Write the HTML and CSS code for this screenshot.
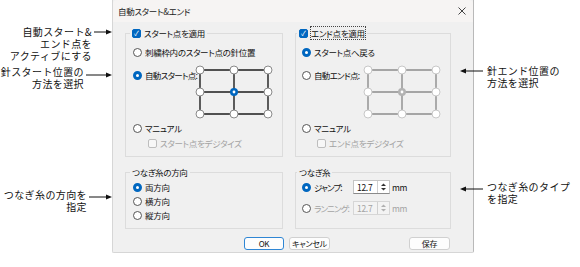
FILE: index.html
```html
<!DOCTYPE html>
<html>
<head>
    <title>自動スタート&amp;エンド</title>
    <link rel="stylesheet" href="styles.css">
</head>
<body>
<div class="page">

    <!-- left callouts -->
    <div class="notes-left">
        <div class="callout">
            <div class="note-text">自動スタート&amp;<br>エンド点を<br>アクティブにする</div>
            <svg class="arrow arrow-r" width="18" height="12"><line x1="0" y1="6" x2="13" y2="6"/><polygon points="18,6 12,3.5 12,8.5"/></svg>
        </div>
        <div class="callout callout-2">
            <div class="note-text">針スタート位置の<br>方法を選択</div>
            <svg class="arrow arrow-r arrow-low" width="26" height="12"><line x1="0" y1="6" x2="21" y2="6"/><polygon points="26,6 20,3.5 20,8.5"/></svg>
        </div>
        <div class="callout callout-3">
            <div class="note-text">つなぎ糸の方向を<br>指定</div>
            <svg class="arrow arrow-r arrow-mid" width="23" height="12"><line x1="0" y1="6" x2="18" y2="6"/><polygon points="23,6 17,3.5 17,8.5"/></svg>
        </div>
    </div>

    <!-- dialog -->
    <div class="dialog">
        <div class="titlebar">
            <span class="title">自動スタート&amp;エンド</span>
            <svg class="close" width="8" height="8"><line x1="0.5" y1="0.5" x2="7.5" y2="7.5"/><line x1="7.5" y1="0.5" x2="0.5" y2="7.5"/></svg>
        </div>
        <div class="dlg-body">
            <div class="groups">

                <div class="group">
                    <div class="legend"><span class="check on">✓</span>スタート点を適用</div>
                    <div class="row first"><span class="radio"></span>刺繍枠内のスタート点の針位置</div>
                    <div class="grid-row">
                        <div class="row grid-label"><span class="radio on"></span>自動スタート点:</div>
                        <svg class="pick" width="78" height="56">
                            <g class="lines">
                                <line x1="5" y1="6" x2="73" y2="6"/><line x1="5" y1="28" x2="73" y2="28"/><line x1="5" y1="50" x2="73" y2="50"/>
                                <line x1="5" y1="6" x2="5" y2="50"/><line x1="39" y1="6" x2="39" y2="50"/><line x1="73" y1="6" x2="73" y2="50"/>
                            </g>
                            <g class="dots">
                                <circle cx="5" cy="6" r="4"/><circle cx="39" cy="6" r="4"/><circle cx="73" cy="6" r="4"/>
                                <circle cx="5" cy="28" r="4"/><circle cx="73" cy="28" r="4"/>
                                <circle cx="5" cy="50" r="4"/><circle cx="39" cy="50" r="4"/><circle cx="73" cy="50" r="4"/>
                            </g>
                            <circle class="dot-on" cx="39" cy="28" r="3"/>
                            <circle cx="39" cy="28" r="1.4" fill="#fff"/>
                        </svg>
                    </div>
                    <div class="row manual"><span class="radio"></span>マニュアル</div>
                    <div class="row sub off"><span class="check"></span>スタート点をデジタイズ</div>
                </div>

                <div class="group right">
                    <div class="legend"><span class="check on">✓</span><span class="focus">エンド点を適用</span></div>
                    <div class="row first"><span class="radio on"></span>スタート点へ戻る</div>
                    <div class="grid-row">
                        <div class="row grid-label"><span class="radio"></span>自動エンド点:</div>
                        <svg class="pick disabled" width="78" height="56">
                            <g class="lines">
                                <line x1="5" y1="6" x2="73" y2="6"/><line x1="5" y1="28" x2="73" y2="28"/><line x1="5" y1="50" x2="73" y2="50"/>
                                <line x1="5" y1="6" x2="5" y2="50"/><line x1="39" y1="6" x2="39" y2="50"/><line x1="73" y1="6" x2="73" y2="50"/>
                            </g>
                            <g class="dots">
                                <circle cx="5" cy="6" r="4"/><circle cx="39" cy="6" r="4"/><circle cx="73" cy="6" r="4"/>
                                <circle cx="5" cy="28" r="4"/><circle cx="73" cy="28" r="4"/>
                                <circle cx="5" cy="50" r="4"/><circle cx="39" cy="50" r="4"/><circle cx="73" cy="50" r="4"/>
                            </g>
                            <circle class="dot-on" cx="39" cy="28" r="3"/>
                            <circle cx="39" cy="28" r="1.4" fill="#fff"/>
                        </svg>
                    </div>
                    <div class="row manual"><span class="radio"></span>マニュアル</div>
                    <div class="row sub off"><span class="check"></span>エンド点をデジタイズ</div>
                </div>

                <div class="group">
                    <div class="legend">つなぎ糸の方向</div>
                    <div class="row dir first-dir"><span class="radio on"></span>両方向</div>
                    <div class="row dir"><span class="radio"></span>横方向</div>
                    <div class="row dir"><span class="radio"></span>縦方向</div>
                </div>

                <div class="group right">
                    <div class="legend">つなぎ糸</div>
                    <div class="spin-row first-spin">
                        <div class="row spin-label"><span class="radio on"></span>ジャンプ:</div>
                        <div class="spin">
                            <span class="spin-val">12.7</span>
                            <svg class="spin-btn" width="11" height="12"><polygon points="5.5,2.5 8,5 3,5"/><polygon points="3,7 8,7 5.5,9.5"/></svg>
                        </div>
                        <span class="unit">mm</span>
                    </div>
                    <div class="spin-row second-spin off">
                        <div class="row spin-label"><span class="radio"></span>ランニング:</div>
                        <div class="spin">
                            <span class="spin-val">12.7</span>
                            <svg class="spin-btn" width="11" height="12"><polygon points="5.5,2.5 8,5 3,5"/><polygon points="3,7 8,7 5.5,9.5"/></svg>
                        </div>
                        <span class="unit">mm</span>
                    </div>
                </div>

            </div>

            <div class="buttons">
                <button class="btn ok">OK</button>
                <button class="btn cancel">キャンセル</button>
                <button class="btn save">保存</button>
            </div>
        </div>
    </div>

    <!-- right callouts -->
    <div class="notes-right">
        <div class="callout">
            <svg class="arrow arrow-l" width="23" height="12"><polygon points="0,6 6,3.5 6,8.5"/><line x1="5" y1="6" x2="23" y2="6"/></svg>
            <div class="note-text">針エンド位置の<br>方法を選択</div>
        </div>
        <div class="callout callout-r2">
            <svg class="arrow arrow-l arrow-mid" width="23" height="12"><polygon points="0,6 6,3.5 6,8.5"/><line x1="5" y1="6" x2="23" y2="6"/></svg>
            <div class="note-text">つなぎ糸のタイプ<br>を指定</div>
        </div>
    </div>

</div>
</body>
</html>
```

FILE: styles.css
```css
body {
    margin: 0;
    background: #fff;
    font-family: "Noto Sans CJK JP", "Noto Sans", sans-serif;
    color: #111;
}

.page {
    display: grid;
    grid-template-columns: 112px 362px 1fr;
    width: 580px;
    height: 267px;
}

/* callouts */
.notes-left {
    padding-top: 26px;
}
.notes-right {
    padding-top: 65px;
}
.callout {
    display: flex;
    align-items: flex-start;
}
.callout-2 { margin-top: 4px; }
.callout-3 { margin-top: 99px; }
.callout-r2 { margin-top: 92px; }

.note-text {
    font-size: 10px;
    line-height: 12px;
    letter-spacing: 0.4px;
    color: #111;
}
.notes-left .note-text {
    width: 101px;
    text-align: right;
}
.notes-right .note-text {
    margin-left: 4px;
}

.arrow {
    flex: none;
    position: relative;
    z-index: 1;
}
.arrow line {
    stroke: #111;
    stroke-width: 1;
}
.arrow polygon {
    fill: #111;
}
.arrow-r { margin-left: 2px; }
.arrow-l { margin-left: -14px; }
.arrow-low { margin-top: 3px; }
.arrow-mid { margin-top: 2px; }

/* dialog */
.dialog {
    background: #f0f0f0;
    border: 1px solid #d6d6d6;
    border-right-color: #b9b9b9;
    border-top: none;
    border-radius: 0 0 2px 2px;
    height: 253px;
    box-sizing: border-box;
    font-size: 8.5px;
    font-feature-settings: "palt";
    letter-spacing: -0.3px;
}
.titlebar {
    height: 22px;
    background: #f6f4f3;
    display: flex;
    align-items: center;
    justify-content: space-between;
    padding: 0 7px 0 5px;
    border-radius: 4px 4px 0 0;
}
.title {
    color: #222;
}
.close line {
    stroke: #444;
    stroke-width: 1;
}

.dlg-body {
    padding: 11px 22px 9px 12px;
}
.groups {
    display: grid;
    grid-template-columns: 158px 156px;
    column-gap: 12px;
    row-gap: 15px;
}
.group {
    border: 1px solid #dcdcdc;
    padding: 0 0 7px 7px;
    display: flex;
    flex-direction: column;
    align-items: flex-start;
}
.group.right {
    padding-left: 6px;
}

.legend {
    display: flex;
    align-items: center;
    height: 12px;
    margin-top: -7px;
    margin-left: -3px;
    padding: 0 2px;
    background: #f0f0f0;
}
.group.right .legend {
    margin-left: -5px;
}
.focus {
    outline: 1px dotted #444;
    outline-offset: 0;
}

.row {
    display: flex;
    align-items: center;
    height: 12px;
    white-space: nowrap;
}
.row.first { margin-top: 7px; }
.grid-row {
    display: flex;
    margin-top: 6px;
}
.grid-label {
    width: 62px;
    margin-top: 5px;
    letter-spacing: -0.7px;
}
.group.right .grid-label {
    width: 61px;
}
.row.manual { margin-top: 2px; }
.row.sub {
    margin-top: 3px;
    margin-left: 15px;
}
.off {
    color: #a3a3a3;
}

.row.dir { margin-top: 2px; }
.row.dir.first-dir { margin-top: 3px; }

/* radio + check */
.radio {
    display: inline-block;
    width: 9px;
    height: 9px;
    box-sizing: border-box;
    border: 1px solid #555;
    border-radius: 50%;
    background: #fff;
    margin-right: 3px;
    flex: none;
}
.radio.on {
    border: 3px solid #0067c0;
}
.check {
    display: inline-block;
    width: 9px;
    height: 9px;
    box-sizing: border-box;
    border: 1px solid #bdbdbd;
    border-radius: 2px;
    background: #f7f7f7;
    margin-right: 3px;
    flex: none;
    font-size: 7px;
    line-height: 7px;
    text-align: center;
    color: #fff;
    letter-spacing: 0;
}
.check.on {
    background: #0067c0;
    border-color: #0067c0;
}

/* position picker */
.pick {
    flex: none;
}
.pick .lines line {
    stroke: #1c1c1c;
    stroke-width: 1.4;
}
.pick .dots circle {
    fill: #fff;
    stroke: #8a8a8a;
    stroke-width: 1;
}
.pick .dot-on {
    fill: #0067c0;
    stroke: #0067c0;
    stroke-width: 2;
}
.pick.disabled .lines line {
    stroke: #8c8c8c;
}
.pick.disabled .dots circle {
    stroke: #c8c8c8;
}
.pick.disabled .dot-on {
    fill: #b3b3b3;
    stroke: #b3b3b3;
}

/* spin boxes */
.spin-row {
    display: flex;
    align-items: center;
    height: 14px;
}
.spin-row.first-spin { margin-top: 2px; }
.spin-row.second-spin { margin-top: 7px; }
.spin-label {
    width: 51px;
    letter-spacing: -0.9px;
}
.spin {
    display: flex;
    height: 14px;
    width: 37px;
    box-sizing: border-box;
    border: 1px solid #c4c4c4;
    border-bottom-color: #8a8a8a;
    background: #fff;
}
.spin-val {
    flex: 1;
    padding-left: 3px;
    line-height: 12px;
}
.spin-btn {
    flex: none;
    border-left: 1px solid #d0d0d0;
}
.spin-btn polygon {
    fill: #333;
}
.off .spin {
    background: #f3f3f3;
    border-color: #d6d6d6;
}
.off .spin-btn polygon {
    fill: #b0b0b0;
}
.unit {
    margin-left: 2px;
}

/* buttons */
.buttons {
    display: flex;
    margin-top: 8px;
}
.btn {
    height: 13px;
    width: 41px;
    padding: 0;
    font-family: inherit;
    font-size: 8px;
    font-feature-settings: "palt";
    letter-spacing: -0.3px;
    line-height: 11px;
    color: #111;
    background: #fdfdfd;
    border: 1px solid #d0d0d0;
    border-radius: 3px;
}
.btn.ok {
    margin-left: 119px;
    width: 40px;
    border-color: #2f86d4;
}
.btn.cancel {
    margin-left: 5px;
}
.btn.save {
    margin-left: auto;
    margin-right: 1px;
}
```
